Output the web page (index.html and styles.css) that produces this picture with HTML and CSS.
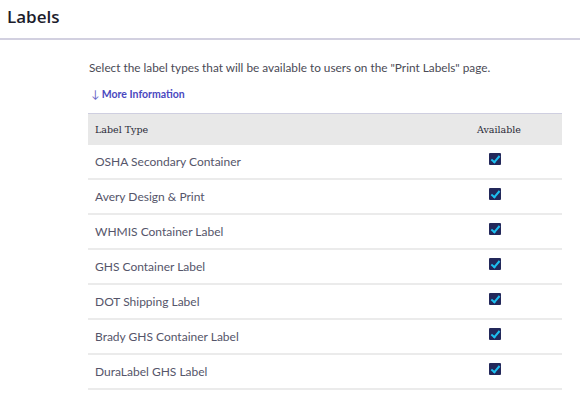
FILE: index.html
```html
<!DOCTYPE html>
<html>
<head>
<meta charset="utf-8">
<link rel="stylesheet" href="styles.css">
</head>
<body>
<header class="page-head">
  <h1 class="title">Labels</h1>
</header>
<main class="content">
  <p class="intro">Select the label types that will be available to users on the "Print Labels" page.</p>
  <a class="more" href="#"><span class="arrow">&#8595;</span> More Information</a>
  <table class="labels">
    <thead>
      <tr><th class="col-type">Label Type</th><th class="col-avail">Available</th></tr>
    </thead>
    <tbody>
      <tr><td>OSHA Secondary Container</td><td class="col-avail"><span class="check"></span></td></tr>
      <tr><td>Avery Design &amp; Print</td><td class="col-avail"><span class="check"></span></td></tr>
      <tr><td>WHMIS Container Label</td><td class="col-avail"><span class="check"></span></td></tr>
      <tr><td>GHS Container Label</td><td class="col-avail"><span class="check"></span></td></tr>
      <tr><td>DOT Shipping Label</td><td class="col-avail"><span class="check"></span></td></tr>
      <tr><td>Brady GHS Container Label</td><td class="col-avail"><span class="check"></span></td></tr>
      <tr><td>DuraLabel GHS Label</td><td class="col-avail"><span class="check"></span></td></tr>
    </tbody>
  </table>
</main>
</body>
</html>
```

FILE: styles.css
```css
html, body { margin: 0; padding: 0; background: #fff; }
body { font-family: "Lato", "Open Sans", sans-serif; color: #4a4a55; }

.page-head {
  height: 38px;
  border-bottom: 2px solid #d2d0e0;
  padding-left: 7px;
  display: flex;
  align-items: center;
}
.title {
  margin: 0;
  font-family: "Open Sans", sans-serif;
  font-size: 17px;
  font-weight: 600;
  color: #1c1c2c;
  position: relative;
  top: -3px;
}

.content { padding: 20px 18px 0 88px; }

.intro {
  margin: 0 0 0 1px;
  font-size: 11.8px;
  line-height: 16px;
  color: #4a4a55;
}
.more {
  display: inline-block;
  margin: 11px 0 0 3px;
  font-size: 10.5px;
  font-weight: 700;
  color: #4a48c0;
  text-decoration: none;
}
.more .arrow { font-weight: 400; font-size: 11px; color: #6a68c8; }

.labels {
  margin-top: 12px;
  width: 474px;
  border-collapse: collapse;
}
.labels thead tr {
  background: #e8e8e8;
  border-top: 1px solid #cfcfe0;
}
.labels th {
  height: 31px;
  padding: 0 7px;
  font-family: "DejaVu Serif", "Liberation Serif", serif;
  font-size: 9.5px;
  font-weight: 400;
  color: #2a2a38;
  text-align: left;
}
.labels th.col-avail { text-align: center; width: 110px; padding-right: 8px; }
.labels tbody tr { border-bottom: 2px solid #ebebeb; }
.labels td {
  height: 33px;
  padding: 0 7px;
  font-size: 12px;
  color: #55556a;
}
.labels td.col-avail { text-align: center; padding-right: 16px; }

.check {
  display: inline-block;
  width: 12px;
  height: 12px;
  background: #23285a;
  border-radius: 1px;
  position: relative;
  vertical-align: -1px;
  top: -2px;
}
.check::after {
  content: "";
  position: absolute;
  left: 4px;
  top: 1px;
  width: 3px;
  height: 7px;
  border: solid #1ec0f0;
  border-width: 0 2px 2px 0;
  transform: rotate(40deg);
}
```
